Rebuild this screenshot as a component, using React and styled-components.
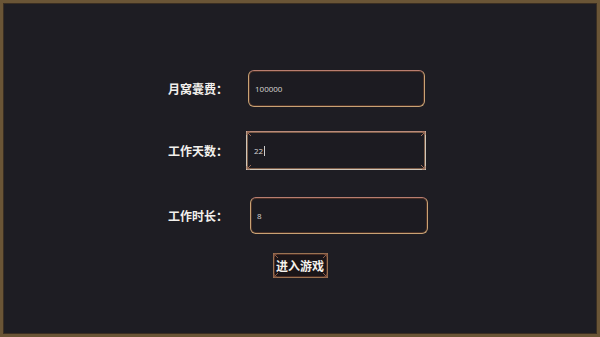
import styled, { createGlobalStyle } from "styled-components";

const Global = createGlobalStyle`
  html, body { margin: 0; padding: 0; background: #1d1c22; }
  #root { width: 600px; height: 337px; }
`;

const Screen = styled.div`
  box-sizing: border-box;
  width: 600px;
  height: 337px;
  background: #1e1d23;
  border: 3px solid #6a5536;
  box-shadow: inset 0 0 0 1px #3a2e22;
  font-family: "Noto Sans CJK SC", "Noto Sans", sans-serif;
  color: #f2f0ec;
  padding-top: 67px;
  display: flex;
  flex-direction: column;
`;

const Row = styled.div`
  display: flex;
  align-items: center;
  padding-left: 165px;
  margin-bottom: ${(p) => p.gap}px;
`;

const Label = styled.div`
  width: ${(p) => p.w}px;
  font-size: 12px;
  font-weight: 700;
  white-space: nowrap;
`;

const Frame = styled.div`
  position: relative;
  box-sizing: border-box;
  width: ${(p) => p.w}px;
  height: ${(p) => p.h}px;
  border: 1px solid ${(p) => (p.focus ? "#cfc7b9" : "#c9a274")};
  border-top-color: ${(p) => (p.focus ? "#b98a7a" : "#b97e70")};
  border-radius: ${(p) => (p.focus ? 0 : 6)}px;
  box-shadow: inset 0 0 0 1px ${(p) => (p.focus ? "#7c5c48" : "#4a3026")};
  background: #1c1b21;
  display: flex;
  align-items: center;
  padding-left: ${(p) => p.pad}px;
`;

const Field = styled.input`
  background: transparent;
  border: none;
  outline: none;
  color: #d8d6d2;
  font-family: "Open Sans", "Noto Sans", sans-serif;
  font-size: 8px;
  width: 100%;
  padding: 0;
`;

const Typed = styled.span`
  font-family: "Open Sans", "Noto Sans", sans-serif;
  font-size: 8px;
  color: #d8d6d2;
`;

const Caret = styled.span`
  display: inline-block;
  width: 1px;
  height: 10px;
  background: #cfcfcf;
  margin-left: 1px;
`;

const Corner = styled.svg`
  position: absolute;
  width: 7px;
  height: 7px;
  ${(p) => (p.top ? "top: -1px;" : "bottom: -1px;")}
  ${(p) => (p.left ? "left: -1px;" : "right: -1px;")}
  transform: scale(${(p) => (p.left ? 1 : -1)}, ${(p) => (p.top ? 1 : -1)});
`;

const ButtonWrap = styled.div`
  display: flex;
  justify-content: center;
`;

const Button = styled.button`
  position: relative;
  box-sizing: border-box;
  width: 55px;
  height: 25px;
  background: #1a1518;
  border: 1px solid #9a7352;
  box-shadow: inset 0 0 0 1px #4a2c24;
  color: #f4f1ec;
  font-family: "Noto Sans CJK SC", sans-serif;
  font-size: 12px;
  font-weight: 700;
  padding: 0;
  cursor: pointer;
`;

function Ornaments({ color }) {
  const corners = [
    { top: true, left: true },
    { top: true, left: false },
    { top: false, left: true },
    { top: false, left: false },
  ];
  return corners.map((c, i) => (
    <Corner key={i} top={c.top} left={c.left} viewBox="0 0 7 7">
      <path d="M1 1 L5 5 M1 4 L1 1 L4 1" stroke={color} strokeWidth="1" fill="none" />
    </Corner>
  ));
}

export default function App() {
  return (
    <>
      <Global />
      <Screen>
        <Row gap={24}>
          <Label w={80}>月窝囊费：</Label>
          <Frame w={177} h={37} pad={6}>
            <Field defaultValue="100000" readOnly />
          </Frame>
        </Row>
        <Row gap={27}>
          <Label w={78}>工作天数：</Label>
          <Frame w={180} h={39} pad={7} focus>
            <Ornaments color="#9a6a55" />
            <Typed>22</Typed>
            <Caret />
          </Frame>
        </Row>
        <Row gap={19}>
          <Label w={82}>工作时长：</Label>
          <Frame w={178} h={37} pad={6}>
            <Field defaultValue="8" readOnly />
          </Frame>
        </Row>
        <ButtonWrap>
          <Button>
            <Ornaments color="#8a5a45" />
            进入游戏
          </Button>
        </ButtonWrap>
      </Screen>
    </>
  );
}
